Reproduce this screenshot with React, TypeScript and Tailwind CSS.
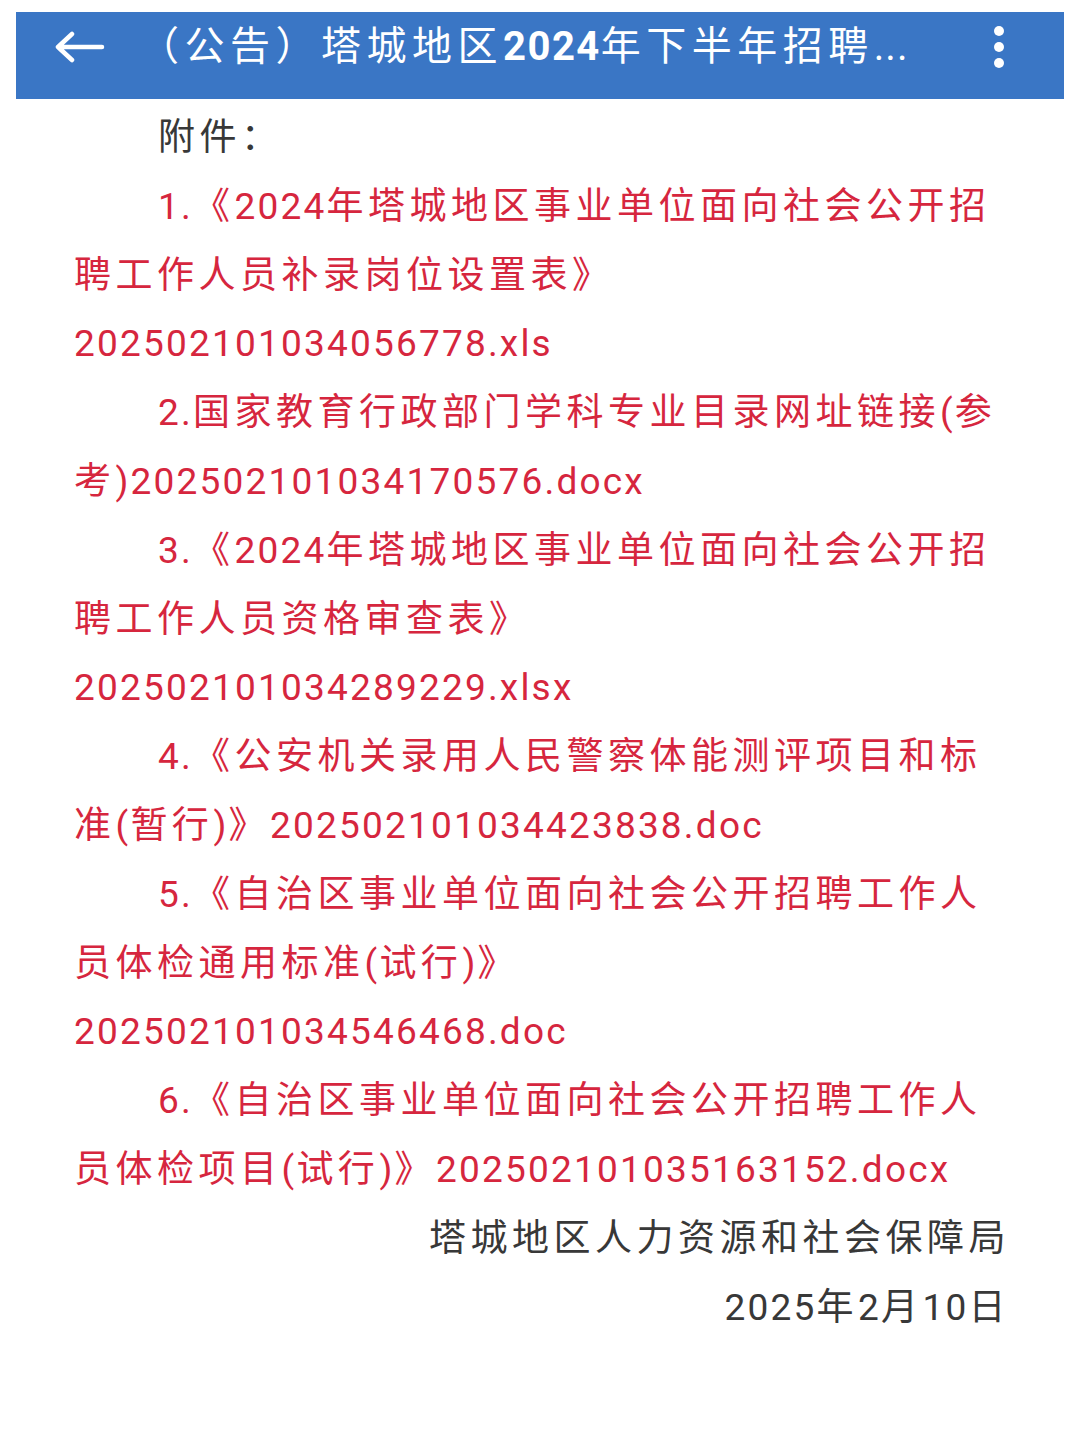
import React from "react";

const FONT = "Roboto, 'Noto Sans CJK SC', sans-serif";

type Line = {
  text: string;
  indent?: boolean;
  gray?: boolean;
  right?: boolean;
};

const LINES: Line[] = [
  { text: "附件：", indent: true, gray: true },
  { text: "1.《2024年塔城地区事业单位面向社会公开招", indent: true },
  { text: "聘工作人员补录岗位设置表》" },
  { text: "202502101034056778.xls" },
  { text: "2.国家教育行政部门学科专业目录网址链接(参", indent: true },
  { text: "考)202502101034170576.docx" },
  { text: "3.《2024年塔城地区事业单位面向社会公开招", indent: true },
  { text: "聘工作人员资格审查表》" },
  { text: "202502101034289229.xlsx" },
  { text: "4.《公安机关录用人民警察体能测评项目和标", indent: true },
  { text: "准(暂行)》202502101034423838.doc" },
  { text: "5.《自治区事业单位面向社会公开招聘工作人", indent: true },
  { text: "员体检通用标准(试行)》" },
  { text: "202502101034546468.doc" },
  { text: "6.《自治区事业单位面向社会公开招聘工作人", indent: true },
  { text: "员体检项目(试行)》202502101035163152.docx" },
  { text: "塔城地区人力资源和社会保障局", gray: true, right: true },
  { text: "2025年2月10日", gray: true, right: true },
];

const CJK = /[\u2E80-\u9FFF\uFF00-\uFFEF\u3000-\u303F]/;

// CJK glyphs and latin/digits are spaced differently in the source
function Spaced({ text }: { text: string }) {
  const parts = text.split(/([\u2E80-\u9FFF\uFF00-\uFFEF\u3000-\u303F]+)/).filter(Boolean);
  return (
    <>
      {parts.map((p, i) =>
        CJK.test(p) ? (
          <span key={i} className="tracking-[4.5px]">
            {p}
          </span>
        ) : (
          <span key={i} className="tracking-[2.2px]">
            {p}
          </span>
        )
      )}
    </>
  );
}

function Header() {
  return (
    <div className="mx-[16px] mt-[12px] h-[87px] bg-[#3a76c5] text-white">
      <div className="flex h-[70px] items-center">
        <svg className="ml-[37px] h-[32px] w-[52px]" viewBox="0 0 52 32" fill="none">
          <path
            d="M49 16 H5 M19 3 L5 16 L19 29"
            stroke="white"
            strokeWidth="4.5"
            strokeLinecap="round"
            strokeLinejoin="round"
          />
        </svg>
        <div className="ml-[34px] whitespace-nowrap text-[40px] leading-none tracking-[5.5px]">
          （公告）塔城地区<span className="font-bold tracking-[1.5px]">2024</span>年下半年招聘
          <span className="tracking-[1px]">...</span>
        </div>
        <div className="ml-auto mr-[60px] flex flex-col gap-[6px]">
          <span className="block h-[10px] w-[10px] rounded-full bg-white" />
          <span className="block h-[10px] w-[10px] rounded-full bg-white" />
          <span className="block h-[10px] w-[10px] rounded-full bg-white" />
        </div>
      </div>
    </div>
  );
}

export default function App() {
  return (
    <div className="min-h-[1440px] w-[1080px] bg-white" style={{ fontFamily: FONT }}>
      <Header />
      <div className="pl-[74px] pr-[70px] pt-[5px]">
        {LINES.map((l, i) => (
          <div
            key={i}
            className={`h-[68.8px] whitespace-nowrap text-[37px] leading-[68.8px] ${
              l.gray ? "text-[#383838]" : "text-[#d6263e]"
            } ${l.indent ? "pl-[84px]" : ""} ${l.right ? "text-right" : ""}`}
          >
            <Spaced text={l.text} />
          </div>
        ))}
      </div>
    </div>
  );
}
